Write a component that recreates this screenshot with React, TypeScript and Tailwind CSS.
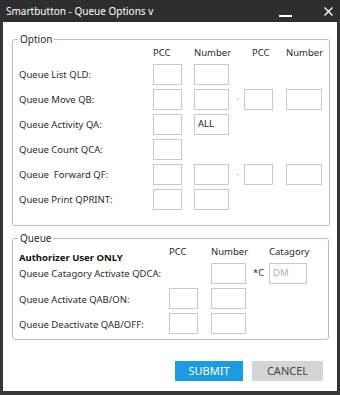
import React from "react";

const Box = ({ w, children, muted }: { w: string; children?: React.ReactNode; muted?: boolean }) => (
  <div
    className={`${w} h-[21px] border border-[#c8c8c8] bg-white flex items-center pl-[3px] text-[9.5px] ${
      muted ? "text-[#b0b0b0]" : "text-[#222]"
    }`}
  >
    {children}
  </div>
);

const OptRow = ({
  label,
  second,
  value,
  number = true,
}: {
  label: string;
  second?: boolean;
  value?: string;
  number?: boolean;
}) => (
  <div className="flex items-center h-[21px]">
    <div className="w-[134px] pt-[2px] whitespace-pre">{label}</div>
    <Box w="w-[29px]" />
    {number && (
      <div className="ml-[12px]">
        <Box w="w-[35px]">{value}</Box>
      </div>
    )}
    {second && (
      <>
        <div className="w-[15px] text-center text-[#777] text-[7px] pl-[2px]">-</div>
        <Box w="w-[29px]" />
        <div className="ml-[13px]">
          <Box w="w-[36px]" />
        </div>
      </>
    )}
  </div>
);

export default function App() {
  return (
    <div
      className="w-[340px] h-[395px] bg-[#363636] flex flex-col text-[#2a2a2a] text-[9.5px]"
      style={{ fontFamily: '"Noto Sans", "Open Sans", sans-serif' }}
    >
      {/* Title bar */}
      <div className="h-[22px] flex items-center pl-[6px] pr-[7px] bg-[#2e2e2e] text-white">
        <span className="text-[10px]">Smartbutton - Queue Options v</span>
        <div className="ml-auto w-[13px] h-[1.5px] bg-white mt-[10px]" />
        <svg className="ml-[32px]" width="9" height="9" viewBox="0 0 9 9">
          <path d="M0.5 0.5 L8.5 8.5 M8.5 0.5 L0.5 8.5" stroke="white" strokeWidth="1.4" />
        </svg>
      </div>

      {/* Body */}
      <div className="flex-1 mx-[3px] mb-[4px] bg-white flex flex-col">
        <fieldset className="mt-[10px] ml-[9px] mr-[8px] border border-[#bcbcbc] rounded-[3px] px-[6px] pb-[15px]">
          <legend className="ml-[-1px] px-[2px] leading-[15px] text-[10px]">Option</legend>
          <div className="flex h-[11px] leading-[11px]">
            <div className="w-[134px]" />
            <div className="w-[41px]">PCC</div>
            <div className="w-[58px]">Number</div>
            <div className="w-[34px]">PCC</div>
            <div>Number</div>
          </div>
          <div className="mt-[6px] flex flex-col gap-[4px]">
            <OptRow label="Queue List QLD:" />
            <OptRow label="Queue Move QB:" second />
            <OptRow label="Queue Activity QA:" value="ALL" />
            <OptRow label="Queue Count QCA:" number={false} />
            <OptRow label="Queue  Forward QF:" second />
            <OptRow label="Queue Print QPRINT:" />
          </div>
        </fieldset>

        <fieldset className="mt-[5px] ml-[9px] mr-[8px] border border-[#bcbcbc] rounded-[3px] px-[6px] pb-[5px]">
          <legend className="ml-[-1px] px-[2px] leading-[15px] text-[10px]">Queue</legend>
          <div className="flex h-[17px] leading-[11px]">
            <div className="w-[150px] mt-[5px] leading-[14px] font-bold text-[#111]">Authorizer User ONLY</div>
            <div className="w-[42px]">PCC</div>
            <div className="w-[58px]">Number</div>
            <div>Catagory</div>
          </div>
          <div className="flex flex-col gap-[4px]">
            <div className="flex items-center h-[21px]">
              <div className="w-[192px] pt-[2px]">Queue Catagory Activate QDCA:</div>
              <Box w="w-[35px]" />
              <div className="w-[23px] pl-[7px]">*C</div>
              <Box w="w-[38px]" muted>
                DM
              </Box>
            </div>
            <div className="flex items-center h-[21px]">
              <div className="w-[150px] pt-[4px]">Queue Activate QAB/ON:</div>
              <Box w="w-[29px]" />
              <div className="ml-[13px]">
                <Box w="w-[35px]" />
              </div>
            </div>
            <div className="flex items-center h-[21px]">
              <div className="w-[150px] pt-[4px]">Queue Deactivate QAB/OFF:</div>
              <Box w="w-[29px]" />
              <div className="ml-[13px]">
                <Box w="w-[35px]" />
              </div>
            </div>
          </div>
        </fieldset>

        <div className="mt-[21px] mr-[14px] flex justify-end gap-[9px]">
          <button className="w-[68px] h-[20px] bg-[#1b9be0] text-white text-[11px] leading-[20px]">SUBMIT</button>
          <button className="w-[71px] h-[20px] bg-[#d5d5d5] text-[#444] text-[11px] leading-[20px]">CANCEL</button>
        </div>
      </div>
    </div>
  );
}
